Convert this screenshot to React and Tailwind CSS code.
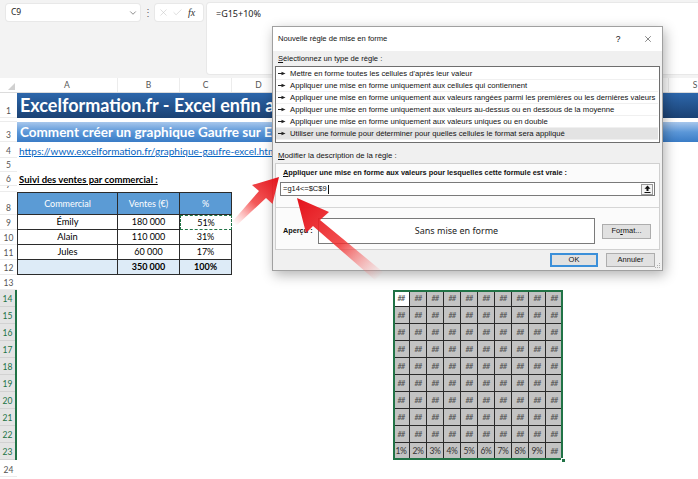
import React from "react";
import { ChevronDown, X, Check } from "lucide-react";

const cols = [
  { l: "A", w: "w-[101px]" },
  { l: "B", w: "w-[62px]" },
  { l: "C", w: "w-[52px]" },
  { l: "D", w: "w-[54px]" },
  { l: "E", w: "w-[54px]" },
  { l: "F", w: "w-[53px]" },
  { l: "G", w: "w-[17px]", sel: true },
  { l: "H", w: "w-[17px]", sel: true },
  { l: "I", w: "w-[17px]", sel: true },
  { l: "J", w: "w-[17px]", sel: true },
  { l: "K", w: "w-[17px]", sel: true },
  { l: "L", w: "w-[17px]", sel: true },
  { l: "M", w: "w-[17px]", sel: true },
  { l: "N", w: "w-[17px]", sel: true },
  { l: "O", w: "w-[17px]", sel: true },
  { l: "P", w: "w-[17px]", sel: true },
  { l: "Q", w: "w-[53px]" },
  { l: "R", w: "w-[53px]" },
  { l: "S", w: "w-[53px]" },
];

const rules = [
  "Mettre en forme toutes les cellules d'après leur valeur",
  "Appliquer une mise en forme uniquement aux cellules qui contiennent",
  "Appliquer une mise en forme uniquement aux valeurs rangées parmi les premières ou les dernières valeurs",
  "Appliquer une mise en forme uniquement aux valeurs au-dessus ou en dessous de la moyenne",
  "Appliquer une mise en forme uniquement aux valeurs uniques ou en double",
  "Utiliser une formule pour déterminer pour quelles cellules le format sera appliqué",
];

const sales = [
  { name: "Émily", v: "180 000", p: "51%" },
  { name: "Alain", v: "110 000", p: "31%" },
  { name: "Jules", v: "60 000", p: "17%" },
];

const RowHead = ({ n }) => (
  <div className="w-[17px] shrink-0 flex items-end justify-center overflow-hidden text-[8.5px] leading-[11px] text-[#555] border-b border-[#ececec]">
    {n}
  </div>
);

const Row = ({ n, h, children }) => (
  <div className={"flex " + h}>
    <RowHead n={n} />
    {children}
  </div>
);

const RuleArrow = () => (
  <svg width="8" height="5" viewBox="0 0 8 5" className="shrink-0">
    <path d="M0 2.5h4" stroke="#222" strokeWidth="1" />
    <path d="M3.5 0.8L7.5 2.5L3.5 4.2z" fill="#222" />
  </svg>
);

function FormulaBar() {
  return (
    <div className="h-[78px] bg-[#f3f3f3] flex items-start pt-[3px] pl-[6px] font-['Noto_Sans',sans-serif]">
      <div className="mt-[1px] w-[134px] h-[17px] bg-white rounded-[3px] shadow-[0_0_0_1px_#e8e8e8] flex items-center justify-between pl-[5px] pr-[2px]">
        <span className="text-[8.5px] text-[#222]">C9</span>
        <ChevronDown size={10} strokeWidth={1.6} className="text-[#555]" />
      </div>
      <div className="w-[15px] h-[19px] flex items-center justify-center text-[10px] text-[#666]">⋮</div>
      <div className="mt-[1px] w-[48px] h-[17px] bg-white rounded-[3px] shadow-[0_0_0_1px_#e8e8e8] flex items-center pl-[3px] gap-[3px]">
        <X size={11} strokeWidth={1.2} className="text-[#c4c4c4]" />
        <Check size={11} strokeWidth={1.2} className="text-[#c4c4c4]" />
        <span className="ml-[2px] text-[10px] italic font-['Liberation_Serif',serif] text-[#333]">fx</span>
      </div>
      <div className="ml-[4px] flex-1 h-[71px] bg-white rounded-l-[3px] shadow-[0_0_0_1px_#e8e8e8] pl-[9px] pt-[4px] text-[9px] text-[#222]">
        =G15+10%
      </div>
    </div>
  );
}

function Sheet() {
  const waffleRows = [14, 15, 16, 17, 18, 19, 20, 21, 22, 23];
  return (
    <div className="font-['Lato',sans-serif]">
      <div className="flex h-[15px] border-b border-[#dcdcdc] bg-white">
        <div className="w-[17px] shrink-0 flex items-end justify-end pb-[2px] pr-[2px]">
          <svg width="7" height="7" viewBox="0 0 7 7">
            <path d="M7 0V7H0z" fill="#d0d0d0" />
          </svg>
        </div>
        {cols.map((c) => (
          <div
            key={c.l}
            className={
              c.w +
              " shrink-0 flex items-end pb-[1px] justify-center text-[8.5px] leading-[11px] border-r border-[#ececec] " +
              (c.sel ? "bg-[#e1e1e1] text-[#217346]" : "text-[#555]")
            }
          >
            {c.l}
          </div>
        ))}
      </div>

      <Row n={1} h="h-[25px]">
        <div className="flex-1 bg-gradient-to-b from-[#2d67ab] to-[#1b4274] text-white font-bold text-[18px] pl-[3px] flex items-center whitespace-nowrap overflow-hidden">
          Excelformation.fr - Excel enfin accessible !
        </div>
      </Row>
      <Row n={2} h="h-[4px]">
        <div className="flex-1" />
      </Row>
      <Row n={3} h="h-[20px]">
        <div className="flex-1 bg-gradient-to-b from-[#a7c7ec] via-[#5b97d8] to-[#3a7cc6] text-white font-bold text-[13.5px] pl-[3px] flex items-center whitespace-nowrap overflow-hidden">
          Comment créer un graphique Gaufre sur Excel
        </div>
      </Row>
      <Row n={4} h="h-[16px]">
        <div className="flex-1 flex items-end pl-[2px] text-[10px] leading-[13px] text-[#0563c1] underline whitespace-nowrap">
          https://www.excelformation.fr/graphique-gaufre-excel.html
        </div>
      </Row>
      <Row n={5} h="h-[14px]">
        <div className="flex-1" />
      </Row>
      <Row n={6} h="h-[14px]">
        <div className="flex-1 flex items-end pl-[2px] text-[9.5px] leading-[13px] font-bold underline whitespace-nowrap">
          Suivi des ventes par commercial :
        </div>
      </Row>
      <Row n={7} h="h-[6px]">
        <div className="flex-1" />
      </Row>
      <Row n={8} h="h-[23px]">
        <div className="w-[101px] border border-[#2b2b2b] bg-[#5b9bd5] text-white text-[9px] flex items-center justify-center">Commercial</div>
        <div className="w-[62px] border-y border-r border-[#2b2b2b] bg-[#5b9bd5] text-white text-[9px] flex items-center justify-center">Ventes (€)</div>
        <div className="w-[52px] border-y border-r border-[#2b2b2b] bg-[#5b9bd5] text-white text-[9px] flex items-center justify-center">%</div>
      </Row>
      {sales.map((s, i) => (
        <Row key={s.name} n={9 + i} h="h-[15px]">
          <div className="w-[101px] border-x border-b border-[#2b2b2b] text-[9.3px] flex items-center justify-center">{s.name}</div>
          <div className="w-[62px] border-r border-b border-[#2b2b2b] text-[9px] flex items-center justify-center">{s.v}</div>
          <div className={"w-[52px] text-[9px] flex items-center justify-center " + (i === 0 ? "border-[1.5px] border-dashed border-[#217346]" : "border-r border-b border-[#2b2b2b]")}>
            {s.p}
          </div>
        </Row>
      ))}
      <Row n={12} h="h-[15px]">
        <div className="w-[101px] border-x border-b border-[#2b2b2b] bg-[#ddebf7]" />
        <div className="w-[62px] border-r border-b border-[#2b2b2b] bg-[#ddebf7] font-bold text-[9px] flex items-center justify-center">350 000</div>
        <div className="w-[52px] border-r border-b border-[#2b2b2b] bg-[#ddebf7] font-bold text-[9px] flex items-center justify-center">100%</div>
      </Row>
      <Row n={13} h="h-[15px]">
        <div className="flex-1" />
      </Row>

      <div className="flex">
        <div className="w-[17px] shrink-0 flex flex-col border-r-2 border-[#217346]">
          {waffleRows.map((n) => (
            <div key={n} className="h-[17px] bg-[#e4e4e4] border-b border-[#d2d2d2] flex items-end justify-center pb-[1px] text-[8.5px] leading-[11px] text-[#217346]">
              {n}
            </div>
          ))}
        </div>
        <div className="w-[376px] shrink-0" />
        <div className="relative w-[170px] h-[170px] grid grid-cols-10">
          {waffleRows.map((r, ri) =>
            Array.from({ length: 10 }).map((_, ci) => {
              const last = ri === 9;
              const label = last && ci < 9 ? `${ci + 1}%` : "##";
              return (
                <div
                  key={r + "-" + ci}
                  className={
                    "w-[17px] h-[17px] border-r border-b border-[#2a2a2a] flex items-center justify-center " +
                    (ri === 0 && ci === 0 ? "bg-white " : "bg-[#c3c3c3] ") +
                    (last && ci < 9 ? "text-[8.5px] text-[#333] tracking-[-0.3px]" : "text-[7px] italic font-bold text-[#5f5f5f] tracking-[-0.5px]")
                  }
                >
                  {label}
                </div>
              );
            })
          )}
          <div className="absolute inset-0 border-2 border-[#217346] pointer-events-none" />
          <div className="absolute -right-[3px] -bottom-[3px] w-[5px] h-[5px] bg-[#217346] border border-white" />
        </div>
      </div>
      <Row n={24} h="h-[17px]">
        <div className="flex-1" />
      </Row>
      <Row n={25} h="h-[17px]">
        <div className="flex-1" />
      </Row>
    </div>
  );
}

function Dialog() {
  return (
    <div className="absolute left-[272px] top-[26px] w-[391px] h-[245px] bg-[#f0f0f0] border border-[#a0a0a0] shadow-[2px_4px_12px_rgba(0,0,0,0.3)] font-['Liberation_Sans',sans-serif] text-[#111] flex flex-col">
      <div className="h-[24px] bg-white flex items-center pl-[5px] pr-[4px] text-[7.6px]">
        <span className="flex-1">Nouvelle règle de mise en forme</span>
        <span className="w-[20px] text-center text-[8.5px]">?</span>
        <span className="ml-[10px] w-[20px] flex justify-center">
          <X size={10} strokeWidth={1.2} />
        </span>
      </div>
      <div className="px-[2px]">
        <div className="mt-[2px] h-[12px] pl-[3px] flex items-center text-[7.6px]">
          <span><span className="underline">S</span>électionnez un type de règle :</span>
        </div>
        <div className="mt-[1px] h-[77px] bg-white border border-[#6e6e6e] pt-[1px] pr-[1px]">
          {rules.map((r, i) => (
            <div
              key={r}
              className={
                "h-[12px] flex items-center gap-[4px] pl-[2px] text-[7.7px] whitespace-nowrap border-b border-[#f0f0f0] " +
                (i === 5 ? "bg-[#e3e3e3]" : "")
              }
            >
              <RuleArrow />
              <span>{r}</span>
            </div>
          ))}
        </div>
        <div className="mt-[7px] h-[12px] pl-[3px] flex items-center text-[7.8px]">
          <span><span className="underline">M</span>odifier la description de la règle :</span>
        </div>
        <div className="mt-[1px] h-[87px] bg-[#fbfbfb] border border-[#d0d0d0] flex flex-col">
          <div className="h-[44px] border-b border-[#d6d6d6] px-[4px]">
            <div className="h-[18px] pl-[3px] flex items-center text-[7.35px] font-bold whitespace-nowrap">
              <span><span className="underline">A</span>ppliquer une mise en forme aux valeurs pour lesquelles cette formule est vraie :</span>
            </div>
            <div className="h-[14px] bg-white border border-[#7a7a7a] flex items-center pl-[2px] pr-[1px] text-[7.5px]">
              <span>=g14&lt;=$C$9</span>
              <span className="w-[1px] h-[9px] bg-[#111] ml-[1px]" />
              <span className="ml-auto w-[12px] h-[11px] border border-[#9a9a9a] bg-[#f4f4f4] flex items-center justify-center">
                <svg width="7" height="8" viewBox="0 0 7 8">
                  <path d="M3.5 0.5L6.5 3.8H4.5V6H2.5V3.8H0.5z" fill="#111" />
                  <path d="M0.5 7.5h6" stroke="#111" strokeWidth="1" />
                </svg>
              </span>
            </div>
          </div>
          <div className="flex items-center pl-[7px] pt-[10px]">
            <span className="w-[35px] shrink-0 whitespace-nowrap text-[7.3px] font-bold">Aperçu :</span>
            <div className="w-[277px] shrink-0 h-[26px] bg-white border border-[#7a7a7a] flex items-center justify-center text-[9px] text-[#222] font-['Noto_Sans',sans-serif]">
              Sans mise en forme
            </div>
            <div className="ml-[7px] w-[49px] shrink-0 h-[15px] bg-[#e1e1e1] border border-[#adadad] flex items-center justify-center text-[7.5px]">
              <span>Fo<span className="underline">r</span>mat...</span>
            </div>
          </div>
        </div>
        <div className="mt-[3px] flex justify-end gap-[8px] pr-[5px]">
          <div className="w-[48px] h-[14px] bg-[#e1e1e1] border-2 border-[#3b8fd9] flex items-center justify-center text-[7.5px]">OK</div>
          <div className="w-[49px] h-[14px] bg-[#e1e1e1] border border-[#adadad] flex items-center justify-center text-[7.5px]">Annuler</div>
        </div>
      </div>
      <svg width="6" height="6" viewBox="0 0 6 6" className="absolute right-[1px] bottom-[1px]">
        <rect x="4" y="0" width="1" height="1" fill="#b0b0b0" />
        <rect x="2" y="2" width="1" height="1" fill="#b0b0b0" />
        <rect x="4" y="2" width="1" height="1" fill="#b0b0b0" />
        <rect x="0" y="4" width="1" height="1" fill="#b0b0b0" />
        <rect x="2" y="4" width="1" height="1" fill="#b0b0b0" />
        <rect x="4" y="4" width="1" height="1" fill="#b0b0b0" />
      </svg>
    </div>
  );
}

function Arrows() {
  return (
    <svg width="698" height="479" className="absolute left-0 top-0 pointer-events-none">
      <defs>
        <linearGradient id="a1" gradientUnits="userSpaceOnUse" x1="234" y1="224" x2="279" y2="177">
          <stop offset="0" stopColor="#ff6a6a" stopOpacity="0" />
          <stop offset="0.45" stopColor="#f03030" stopOpacity="0.8" />
          <stop offset="1" stopColor="#e3121b" />
        </linearGradient>
        <linearGradient id="a2" gradientUnits="userSpaceOnUse" x1="380" y1="278" x2="297" y2="198">
          <stop offset="0" stopColor="#ff7a7a" stopOpacity="0" />
          <stop offset="0.45" stopColor="#f03030" stopOpacity="0.85" />
          <stop offset="1" stopColor="#e3121b" />
        </linearGradient>
      </defs>
      <polygon
        points="279,177 272.5,204 266,198 236,226 232,222 259,191 252,185"
        fill="url(#a1)"
      />
      <polygon
        points="297,198 329,212 320,220 383,272 375,280 313,226 306,233"
        fill="url(#a2)"
      />
    </svg>
  );
}

export default function App() {
  return (
    <div className="relative w-[698px] h-[479px] overflow-hidden bg-white text-black">
      <FormulaBar />
      <Sheet />
      <Dialog />
      <Arrows />
    </div>
  );
}
